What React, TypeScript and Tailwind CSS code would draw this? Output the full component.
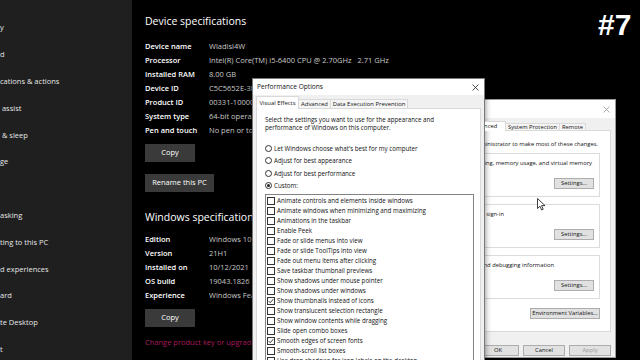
import React from "react";

const sideItems = [
  "y",
  "d",
  "cations & actions",
  " assist",
  " & sleep",
  "ge",
  "",
  "asking",
  "ting to this PC",
  "d experiences",
  "ard",
  "te Desktop",
  "t",
];

function Row({ label, value, clip }: { label: string; value: string; clip?: boolean }) {
  return (
    <div className="flex h-[14px] items-center whitespace-pre">
      <div className="w-[64px] shrink-0 font-semibold text-white">{label}</div>
      <div className={`text-[#c9c9c9] ${clip ? "w-[43px] overflow-hidden" : ""}`}>{value}</div>
    </div>
  );
}

function DarkButton({ label, w }: { label: string; w: string }) {
  return (
    <div className={`${w} flex h-[18px] items-center justify-center bg-[#3a3a3a] text-white`}>{label}</div>
  );
}

const listItems: [string, boolean][] = [
  ["Animate controls and elements inside windows", false],
  ["Animate windows when minimizing and maximizing", false],
  ["Animations in the taskbar", false],
  ["Enable Peek", false],
  ["Fade or slide menus into view", false],
  ["Fade or slide ToolTips into view", false],
  ["Fade out menu items after clicking", false],
  ["Save taskbar thumbnail previews", false],
  ["Show shadows under mouse pointer", false],
  ["Show shadows under windows", false],
  ["Show thumbnails instead of icons", true],
  ["Show translucent selection rectangle", false],
  ["Show window contents while dragging", false],
  ["Slide open combo boxes", false],
  ["Smooth edges of screen fonts", true],
  ["Smooth-scroll list boxes", false],
  ["Use drop shadows for icon labels on the desktop", false],
];

function Radio({ label, checked }: { label: string; checked?: boolean }) {
  return (
    <div className="flex h-[12.5px] items-center gap-[2px]">
      <div className="flex h-[7px] w-[7px] items-center justify-center rounded-full border border-[#333] bg-white">
        {checked && <div className="h-[3px] w-[3px] rounded-full bg-[#222]" />}
      </div>
      <span>{label}</span>
    </div>
  );
}

function Check({ label, checked }: { label: string; checked: boolean }) {
  return (
    <div className="flex h-[10px] items-center gap-[2px] whitespace-nowrap">
      <div className="flex h-[8px] w-[8px] shrink-0 items-center justify-center border border-[#333] bg-white">
        {checked && (
          <svg width="6" height="6" viewBox="0 0 6 6">
            <polyline points="0.8,3.2 2.3,4.7 5.2,1.2" fill="none" stroke="#222" strokeWidth="0.9" />
          </svg>
        )}
      </div>
      <span>{label}</span>
    </div>
  );
}

function WinButton({ label, w, disabled }: { label: string; w: string; disabled?: boolean }) {
  return (
    <div
      className={`${w} flex h-[11px] shrink-0 items-center justify-center whitespace-nowrap border border-[#adadad] bg-[#e1e1e1] ${
        disabled ? "text-[#9a9a9a]" : "text-[#111]"
      }`}
    >
      {label}
    </div>
  );
}

function PerformanceOptions() {
  return (
    <div className="absolute left-[252px] top-[78px] h-[300px] w-[233px] border border-[#7a7a7a] bg-[#f0f0f0] text-[6.2px] text-[#111] shadow-[0_0_6px_rgba(0,0,0,0.5)]">
      <div className="flex h-[16px] items-center justify-between bg-white pl-[4px] pr-[4px] text-[6.6px]">
        <span>Performance Options</span>
        <svg width="7" height="7" viewBox="0 0 7 7" className="mr-[1px]">
          <path d="M0.5 0.5 L6.5 6.5 M6.5 0.5 L0.5 6.5" stroke="#222" strokeWidth="0.8" />
        </svg>
      </div>
      <div className="px-[3px] pt-[1px]">
        <div className="flex h-[13px] items-end whitespace-nowrap text-[5.9px]">
          <div className="relative z-10 flex h-[13px] w-[43px] shrink-0 items-center justify-center border border-b-0 border-[#d9d9d9] bg-white">
            Visual Effects
          </div>
          <div className="flex h-[10px] w-[32px] shrink-0 items-center justify-center border border-l-0 border-[#d9d9d9] bg-[#f5f5f5]">
            Advanced
          </div>
          <div className="flex h-[10px] w-[77px] shrink-0 items-center justify-center border border-l-0 border-[#d9d9d9] bg-[#f5f5f5]">
            Data Execution Prevention
          </div>
        </div>
        <div className="-mt-px h-[260px] border border-[#d9d9d9] bg-white pl-[8px] pr-[6px] pt-[7px]">
          <div className="leading-[8px]">
            <div>Select the settings you want to use for the appearance and</div>
            <div>performance of Windows on this computer.</div>
          </div>
          <div className="mt-[10px]">
            <Radio label="Let Windows choose what's best for my computer" />
            <Radio label="Adjust for best appearance" />
            <Radio label="Adjust for best performance" />
            <Radio label="Custom:" checked />
          </div>
          <div className="mt-[1.5px] h-[200px] overflow-hidden border border-[#828282] bg-white pl-px pt-px">
            {listItems.map(([l, c]) => (
              <Check key={l} label={l} checked={c} />
            ))}
          </div>
        </div>
      </div>
    </div>
  );
}

function RightLine({ text, pr }: { text: string; pr: string }) {
  return (
    <div className={`flex h-[8px] items-center justify-end ${pr}`}>
      <span className="shrink-0 whitespace-nowrap">{text}</span>
    </div>
  );
}

function GroupBox({ text, textPr }: { text: string; textPr: string }) {
  return (
    <div className="h-[44px] border border-l-0 border-[#dcdcdc] pt-[5px]">
      <RightLine text={text} pr={textPr} />
      <div className="mt-[11px] flex justify-end pr-[5px]">
        <WinButton label="Settings..." w="w-[40px]" />
      </div>
    </div>
  );
}

function SystemProperties() {
  return (
    <div className="absolute left-[485px] top-[99px] h-[259px] w-[131px] overflow-hidden border border-l-0 border-[#9a9a9a] bg-[#f0f0f0] text-[5.8px] text-[#111]">
      <div className="flex h-[18px] items-center justify-end bg-white pr-[5px]">
        <svg width="7" height="7" viewBox="0 0 7 7">
          <path d="M0.5 0.5 L6.5 6.5 M6.5 0.5 L0.5 6.5" stroke="#9a9a9a" strokeWidth="0.8" />
        </svg>
      </div>
      <div className="pr-[4px] pt-[3px]">
        <div className="flex h-[10px] items-end justify-end whitespace-nowrap pr-[25px]">
          <div className="relative z-10 flex h-[10px] w-[44px] shrink-0 items-center justify-center border border-b-0 border-[#d9d9d9] bg-white">
            Advanced
          </div>
          <div className="flex h-[8px] w-[54px] shrink-0 items-center justify-center border border-l-0 border-[#d9d9d9] bg-[#f5f5f5]">
            System Protection
          </div>
          <div className="flex h-[8px] w-[26px] shrink-0 items-center justify-center border border-l-0 border-[#d9d9d9] bg-[#f5f5f5]">
            Remote
          </div>
        </div>
        <div className="-mt-px h-[202px] border border-l-0 border-[#d9d9d9] bg-white pr-[10px] pt-[9px]">
          <RightLine
            text="You must be logged on as an Administrator to make most of these changes."
            pr="pr-[2px]"
          />
          <div className="mt-[5px] flex flex-col gap-[7px]">
            <GroupBox text="Visual effects, processor scheduling, memory usage, and virtual memory" textPr="pr-[7px]" />
            <GroupBox text="Desktop settings related to your sign-in" textPr="pr-[95px]" />
            <GroupBox text="System startup, system failure, and debugging information" textPr="pr-[45px]" />
          </div>
          <div className="mt-[9px] flex justify-end">
            <WinButton label="Environment Variables..." w="w-[70px]" />
          </div>
        </div>
        <div className="mt-[13px] flex justify-end gap-[4px]">
          <WinButton label="OK" w="w-[42px]" />
          <WinButton label="Cancel" w="w-[42px]" />
          <WinButton label="Apply" w="w-[42px]" disabled />
        </div>
      </div>
    </div>
  );
}

export default function App() {
  return (
    <div className="relative flex h-[360px] w-[640px] overflow-hidden bg-black font-['Open_Sans',sans-serif]">
      <aside className="h-full w-[132px] shrink-0 bg-[#1f1f1f] pt-[14.6px] text-[7.5px] text-[#e6e6e6]">
        {sideItems.map((t, i) => (
          <div key={i} className="flex h-[26.8px] items-center whitespace-pre">
            {t}
          </div>
        ))}
      </aside>
      <main className="flex-1 pl-[13px] pt-[13px] text-[7.5px]">
        <div className="h-[16px] text-[10.5px] leading-[16px] text-white">Device specifications</div>
        <div className="mt-[10.5px]">
          <Row label="Device name" value="Wladisl4W" />
          <Row label="Processor" value="Intel(R) Core(TM) i5-6400 CPU @ 2.70GHz   2.71 GHz" />
          <Row label="Installed RAM" value="8.00 GB" />
          <Row label="Device ID" value="C5C5652E-3B7A-4A1E-9F5B-2D8C7E1A6B44" clip />
          <Row label="Product ID" value="00331-10000-00001-AA468" clip />
          <Row label="System type" value="64-bit operating system, x64-based processor" clip />
          <Row label="Pen and touch" value="No pen or touch input is available for this display" clip />
        </div>
        <div className="mt-[6.5px]">
          <DarkButton label="Copy" w="w-[50px]" />
        </div>
        <div className="mt-[12px]">
          <DarkButton label="Rename this PC" w="w-[69px]" />
        </div>
        <div className="mt-[17px] h-[16px] w-[107px] overflow-hidden whitespace-nowrap text-[10.5px] leading-[16px] text-white">
          Windows specifications
        </div>
        <div className="mt-[8px]">
          <Row label="Edition" value="Windows 10 Pro" clip />
          <Row label="Version" value="21H1" />
          <Row label="Installed on" value="10/12/2021" />
          <Row label="OS build" value="19043.1826" />
          <Row label="Experience" value="Windows Feature Experience Pack 120.2212.4180.0" clip />
        </div>
        <div className="mt-[6px]">
          <DarkButton label="Copy" w="w-[50px]" />
        </div>
        <div className="mt-[9px] h-[12px] w-[107px] overflow-hidden whitespace-nowrap leading-[12px] text-[#a8195e]">
          Change product key or upgrade your edition of Windows
        </div>
      </main>

      <SystemProperties />
      <PerformanceOptions />

      <svg className="absolute left-[537px] top-[198px]" width="9" height="13" viewBox="0 0 9 13">
        <path d="M0.5 0.5 L0.5 10.5 L3 8.2 L4.6 12 L6.2 11.3 L4.6 7.6 L8 7.6 Z" fill="white" stroke="#111" strokeWidth="0.8" />
      </svg>

      <div className="absolute left-[598px] top-[10px] font-['Liberation_Sans',sans-serif] text-[30px] font-bold leading-none text-white [text-shadow:1px_1px_2px_rgba(0,0,0,0.8)]">
        #7
      </div>
    </div>
  );
}
